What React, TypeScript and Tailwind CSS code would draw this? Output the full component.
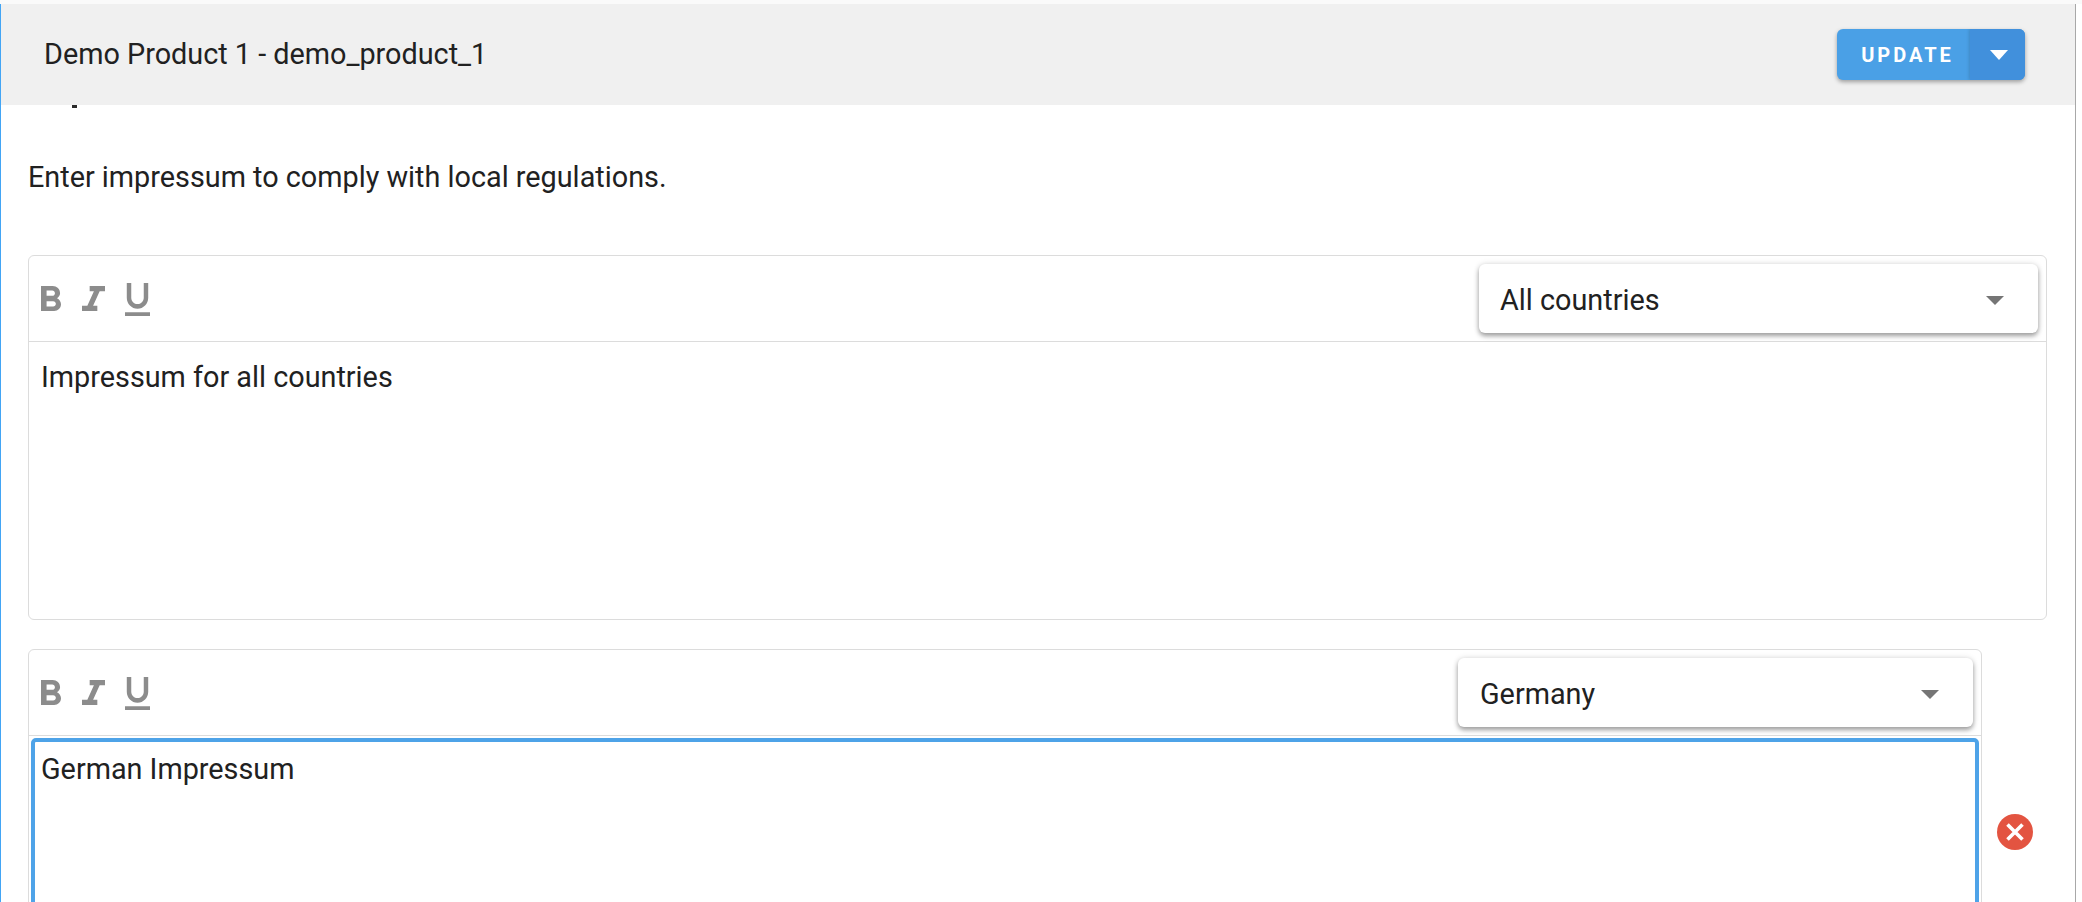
const roboto = "font-['Roboto',sans-serif]";

function Toolbar({ label, selectClass }: { label: string; selectClass: string }) {
  return (
    <div className="flex h-[86px] items-center justify-between border-b border-[#dcdcdc] pb-[1px] pl-[12px] pr-[8px]">
      <div className="mt-[2px] flex items-start text-[#8c8c8c]">
        <svg className="mt-[3px]" width="20" height="25" viewBox="7 4 10.75 14" preserveAspectRatio="none" fill="currentColor">
          <path d="M15.6 10.79c.97-.67 1.65-1.77 1.65-2.79 0-2.26-1.75-4-4-4H7v14h7.04c2.09 0 3.71-1.7 3.71-3.79 0-1.52-.86-2.82-2.15-3.42zM10 6.5h3c.83 0 1.5.67 1.5 1.5s-.67 1.5-1.5 1.5h-3v-3zm3.5 9H10v-3h3.5c.83 0 1.5.67 1.5 1.5s-.67 1.5-1.5 1.5z" />
        </svg>
        <svg className="ml-[21px] mt-[3px]" width="23" height="25" viewBox="6 4 12 14" preserveAspectRatio="none" fill="currentColor">
          <path d="M10 4v3h2.21l-3.42 8H6v3h8v-3h-2.21l3.42-8H18V4z" />
        </svg>
        <svg className="ml-[20px]" width="25" height="33" viewBox="5 3 14 18" preserveAspectRatio="none" fill="currentColor">
          <path d="M12 17c3.31 0 6-2.69 6-6V3h-2.5v8c0 1.93-1.57 3.5-3.5 3.5S8.5 12.93 8.5 11V3H6v8c0 3.31 2.69 6 6 6zm-7 2v2h14v-2H5z" />
        </svg>
      </div>
      <div className={`flex h-[69px] ${selectClass} items-center justify-between rounded-[6px] bg-white pr-[34px] pt-[5px] shadow-[0_3px_5px_rgba(0,0,0,0.35),0_0_6px_rgba(0,0,0,0.12)]`}>
        <span className="text-[28.8px] text-[#212121]">{label}</span>
        <span className="h-0 w-0 border-x-[9px] border-t-[9px] border-x-transparent border-t-[#757575]" />
      </div>
    </div>
  );
}

export default function App() {
  return (
    <div className={`h-[902px] w-[2082px] overflow-hidden bg-white pt-[4px] ${roboto}`}>
      <div className="absolute left-0 top-0 h-[4px] w-full bg-[#fafafa]" />
      <div className="h-[898px] w-[2076px] overflow-hidden border-l-[1.5px] border-r-[1.5px] border-l-[#42a5f5] border-r-[#a8a8a8]">
        <div className="flex h-[101px] items-center justify-between bg-[#f0f0f0] pl-[43px] pr-[50px]">
          <span className="text-[28.8px] text-[#212121]">Demo Product 1 - demo_product_1</span>
          <div className="flex h-[51px] w-[188px] overflow-hidden rounded-[6px] bg-[#4aa0e6] shadow-[0_2px_4px_rgba(0,0,0,0.35)]">
            <span className="flex w-[133px] items-center justify-center pl-[8px] text-[20px] font-bold tracking-[3px] text-white">UPDATE</span>
            <span className="flex flex-1 items-center justify-center bg-[#4190dc] pl-[2px] shadow-[-1px_0_3px_rgba(0,0,0,0.15)]">
              <span className="h-0 w-0 border-x-[9px] border-t-[10px] border-x-transparent border-t-white" />
            </span>
          </div>
        </div>
        <div className="pl-[27px] pr-[28px]">
          <div className="ml-[44px] h-[3px] w-[5px] bg-[#2a2a2a]" />
          <p className="mt-[53px] text-[28.8px] leading-[32px] text-[#212121]">Enter impressum to comply with local regulations.</p>
          <div className="mt-[62px] h-[365px] rounded-[6px] border border-[#dcdcdc]">
            <Toolbar label="All countries" selectClass="w-[559px] pl-[21px]" />
            <div className="px-[12px] pt-[17px] text-[28.8px] leading-[36px] text-[#212121]">Impressum for all countries</div>
          </div>
          <div className="mt-[29px] flex items-center gap-[15px] pr-[14px]">
            <div className="h-[366px] flex-1 rounded-[6px] border border-[#dcdcdc]">
              <Toolbar label="Germany" selectClass="w-[515px] pl-[22px]" />
              <div className="mx-[2px] mt-[2px] h-[277px] rounded-[5px] border-[4px] border-[#4ea3e8] px-[6px] pt-[9px] text-[28.8px] leading-[36px] text-[#212121]">German Impressum</div>
            </div>
            <span className="flex h-[36px] w-[36px] items-center justify-center rounded-full bg-[#e35441]">
              <svg width="20" height="20" viewBox="0 0 20 20" stroke="white" strokeWidth="3.6" fill="none">
                <path d="M2.5 2.5 17.5 17.5M17.5 2.5 2.5 17.5" />
              </svg>
            </span>
          </div>
        </div>
      </div>
    </div>
  );
}
